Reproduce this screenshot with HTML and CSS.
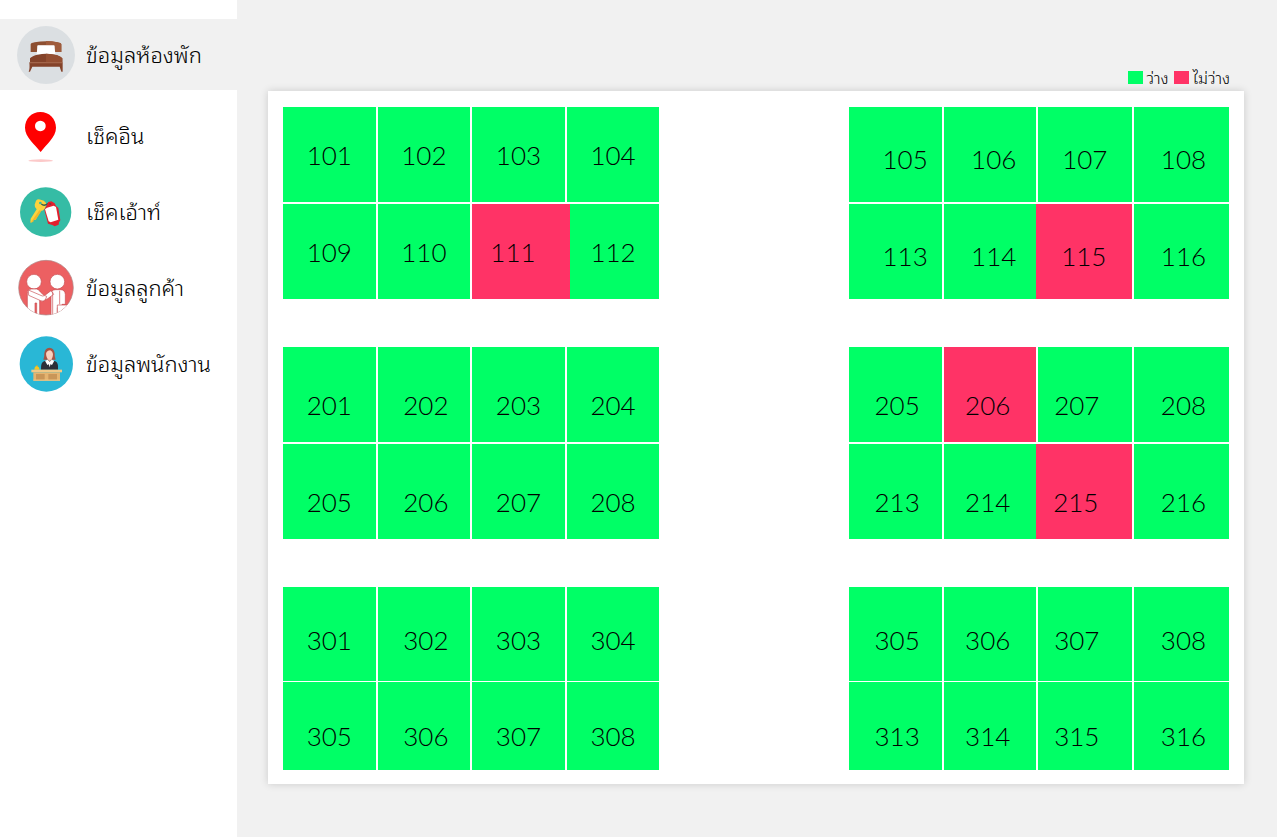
FILE: index.html
```html
<!DOCTYPE html>
<html lang="th">
<head>
<meta charset="utf-8">
<meta name="viewport" content="width=device-width, initial-scale=1">
<title>ข้อมูลห้องพัก</title>
<link rel="stylesheet" href="styles.css">
</head>
<body>
<div class="app">
  <nav class="sidebar">
    <a class="nav-item active" href="#rooms">
      <svg class="nav-icon" viewBox="51 48 174 174" aria-hidden="true">
        <circle cx="138" cy="135" r="87" fill="#dbdfe2"/>
        <path d="M92 126V103q0-4 12-6 34-6 68 0 12 2 12 6v23h-20v-19h-52v19z" fill="#8d4f31"/>
        <path d="M138 93q20 0 34 4 12 2 12 6v23h-20v-19h-26z" fill="#9f5b3b"/>
        <path d="M113 106h50l3 26h-56z" fill="#fff"/>
        <path d="M90 157v-12q6-8 24-11 24-5 48 0 19 3 25 11v12z" fill="#84432a"/>
        <path d="M138 131q40 1 49 14v12h-49z" fill="#944f32"/>
        <path d="M88 157h100v28h-4l-5-15H97l-7 15h-4q4-8 2-28z" fill="#84432a"/>
        <path d="M90 157h97v3H90z" fill="#a9684b"/>
      </svg>
      <span>ข้อมูลห้องพัก</span>
    </a>
    <a class="nav-item" href="#checkin">
      <svg class="nav-icon" viewBox="51 33 174 174" aria-hidden="true">
        <path fill-rule="evenodd" d="M121 48c27 0 47 20 47 47 0 28-29 50-46 73-18-23-47-45-47-73 0-27 20-47 46-47zm0 26a16 16 0 1 0 .1 0z" fill="#f00"/>
        <ellipse cx="122" cy="194" rx="37" ry="4" fill="#fcc9c9"/>
      </svg>
      <span>เช็คอิน</span>
    </a>
    <a class="nav-item" href="#checkout">
      <svg class="nav-icon" viewBox="51 13 174 174" aria-hidden="true">
        <ellipse cx="137" cy="100" rx="77" ry="74" fill="#35bca5"/>
        <path d="M108 66q5-6 14-3 11 1 16 10 1 11-4 17-5 7-12 7l-16 27-6-1-1 6-8 3 1-12 18-28q-7-7-6-14z" fill="#fbd33d"/>
        <path d="M118 95l6 2-17 27-6-1-1 6-8 3z" fill="#f2b72b"/>
        <circle cx="121" cy="73" r="4" fill="#35bca5"/>
        <path d="M124 76q7 6 14 2 8-6 13-3" fill="none" stroke="#335c50" stroke-width="4"/>
        <path d="M145 70l9-2 10 6 4 8 7 6 6 37-4 6-1 7-12 5-7-4-13-4-11-42 6-11z" fill="#e31f2d"/>
        <path d="M141 87l20-6 7 4 7 38-23 8-6-3-11-36z" fill="#fff"/>
        <circle cx="151" cy="76" r="3" fill="#8a3137"/>
      </svg>
      <span>เช็คเอ้าท์</span>
    </a>
    <a class="nav-item" href="#customers">
      <svg class="nav-icon" viewBox="51 26 174 174" aria-hidden="true">
        <clipPath id="people-clip"><circle cx="138" cy="112" r="82"/></clipPath>
        <circle cx="138" cy="112" r="82" fill="#ec6062" stroke="#a98787" stroke-width="2"/>
        <g clip-path="url(#people-clip)" fill="#fff" stroke="#c94d51" stroke-width="2">
          <circle cx="102" cy="94" r="22"/>
          <circle cx="172" cy="94" r="22"/>
          <path d="M82 200v-72q0-12 12-12h16q7 1 11 9l14 13v12l-16-2v52h-9v-42h-5v42z"/>
          <path d="M153 200v-68q0-14 14-14h14q14 0 15 14v30h-10v38h-10v-28h-4v28z"/>
          <path d="M153 121l-21 16 7 11 22-16z"/>
          <path d="M85 119l42 18q8-3 13 1l-3 9q-8 9-15 4l-36-16z"/>
          <path d="M172 164h32v36h-32z"/>
          <path d="M158 124v74M179 121v41" fill="none"/>
        </g>
      </svg>
      <span>ข้อมูลลูกค้า</span>
    </a>
    <a class="nav-item" href="#staff">
      <svg class="nav-icon" viewBox="51 34 174 174" aria-hidden="true">
        <ellipse cx="139" cy="121" rx="80" ry="83" fill="#29b7d6"/>
        <path d="M130 108q4-9 3-19 2-16 15-17 14 1 16 17-1 10 3 19z" fill="#a55343"/>
        <path d="M143 96h12v18h-12z" fill="#efa88f"/>
        <path d="M138 90q2-9 13-10 7 4 8 11 0 15-10 18-10-3-11-19z" fill="#fbd0bd"/>
        <path d="M123 138q-1-22 9-25l12-4 5 4 5-4 12 4q10 4 8 25z" fill="#2b3039"/>
        <path d="M135 111l8-3 6 6 6-6 8 3-7 13-7-4-7 4z" fill="#fff"/>
        <path d="M145 116h8l-4 15z" fill="#fff"/>
        <path d="M103 138q0-10 8-11 7 2 8 11z" fill="#fbc51d"/>
        <circle cx="111" cy="126" r="2" fill="#e7a519"/>
        <path d="M94 138h92v8H94z" fill="#f2c886"/>
        <path d="M100 146h80v25h-80z" fill="#e5b470"/>
        <path d="M108 151h26v17h-26zM145 151h26v17h-26z" fill="#c99658"/>
        <path d="M100 168h80v3h-80z" fill="#f2c886"/>
      </svg>
      <span>ข้อมูลพนักงาน</span>
    </a>
  </nav>

  <main class="main">
    <div class="legend">
      <span class="legend-item"><i class="swatch free"></i>ว่าง</span>
      <span class="legend-item"><i class="swatch busy"></i>ไม่ว่าง</span>
    </div>
    <section class="floors">
      <div class="floor">
        <ul class="block">
          <li>101</li><li>102</li><li>103</li><li>104</li>
          <li>109</li><li>110</li><li class="busy wide-end">111</li><li>112</li>
        </ul>
        <ul class="block east low shift-start">
          <li>105</li><li>106</li><li>107</li><li>108</li>
          <li>113</li><li>114</li><li class="busy wide-start">115</li><li>116</li>
        </ul>
      </div>
      <div class="floor">
        <ul class="block lower">
          <li>201</li><li>202</li><li>203</li><li>204</li>
          <li>205</li><li>206</li><li>207</li><li>208</li>
        </ul>
        <ul class="block east lower shift-mid">
          <li>205</li><li class="busy">206</li><li>207</li><li>208</li>
          <li>213</li><li>214</li><li class="busy wide-start">215</li><li>216</li>
        </ul>
      </div>
      <div class="floor top-floor">
        <ul class="block lower">
          <li>301</li><li>302</li><li>303</li><li>304</li>
          <li>305</li><li>306</li><li>307</li><li>308</li>
        </ul>
        <ul class="block east lower shift-mid">
          <li>305</li><li>306</li><li>307</li><li>308</li>
          <li>313</li><li>314</li><li>315</li><li>316</li>
        </ul>
      </div>
    </section>
  </main>
</div>
</body>
</html>
```
FILE: styles.css
```css
* {
  box-sizing: border-box;
}

body {
  margin: 0;
  background: #f1f1f1;
  color: #000;
  font-family: Lato, "Noto Sans Thai Looped", Laksaman, Umpush, Loma, Garuda, "Noto Sans Thai", "Noto Sans", sans-serif;
  font-weight: 300;
}

.app {
  display: flex;
  min-height: 100vh;
}

.sidebar {
  display: flex;
  flex-direction: column;
  gap: 5px;
  flex: 0 0 237px;
  padding-top: 19px;
  background: #fff;
}

.nav-item {
  display: flex;
  align-items: center;
  gap: 11px;
  height: 71px;
  padding-left: 17px;
  color: #000;
  font-size: 22px;
  line-height: 32px;
  text-decoration: none;
  white-space: nowrap;
}

.nav-item.active {
  margin-bottom: 5px;
  background: #f1f1f1;
}

.nav-icon {
  flex: none;
  width: 58px;
  height: 58px;
}

.main {
  flex: 1;
  min-width: 0;
  padding: 64px 33px 53px 31px;
}

.legend {
  display: flex;
  justify-content: flex-end;
  gap: 5px;
  height: 27px;
  padding-right: 14px;
  font-size: 16px;
  line-height: 27px;
}

.legend-item {
  display: flex;
  align-items: center;
  gap: 4px;
}

.swatch {
  width: 15px;
  height: 13px;
}

.free {
  background: #00ff66;
}

.busy {
  background: #ff3366;
}

.floors {
  display: flex;
  flex-direction: column;
  gap: 48px;
  padding: 16px 15px 14px;
  background: #fff;
  box-shadow: 0 0 8px rgba(0, 0, 0, 0.16);
}

.floor {
  display: grid;
  grid-template-columns: 376fr 380fr;
  column-gap: 20%;
}

.block {
  display: grid;
  grid-template-columns: repeat(4, 1fr);
  grid-auto-rows: 95px;
  gap: 2px;
  margin: 0;
  padding: 0;
  list-style: none;
}

.east {
  grid-template-columns: 93fr 92fr 94fr 95fr;
}

.top-floor .block {
  grid-template-rows: 94px 88px;
  row-gap: 1px;
}

.block li {
  display: flex;
  align-items: center;
  justify-content: center;
  background: #00ff66;
  font-size: 26px;
  line-height: 32px;
}

.block .busy {
  z-index: 1;
  background: #ff3366;
}

.block .wide-end {
  margin-right: -5px;
  padding-right: 16px;
}

.block .wide-start {
  margin-left: -2px;
}

.low li {
  padding-top: 8px;
}

.lower li {
  padding-top: 20px;
}

.top-floor li:nth-child(-n + 4) {
  padding-top: 12px;
}

.lower li:nth-child(4n + 2) {
  padding-left: 4px;
}

.shift-start li:nth-child(4n + 1) {
  padding-left: 20px;
}

.shift-start li:nth-child(4n + 2) {
  padding-left: 8px;
}

.shift-mid li:nth-child(4n + 3) {
  padding-right: 16px;
}

.shift-mid li:nth-child(4n + 2) {
  padding-right: 8px;
}

.shift-mid li:nth-child(4n + 1),
.east li:nth-child(4n) {
  padding-left: 4px;
}
```
